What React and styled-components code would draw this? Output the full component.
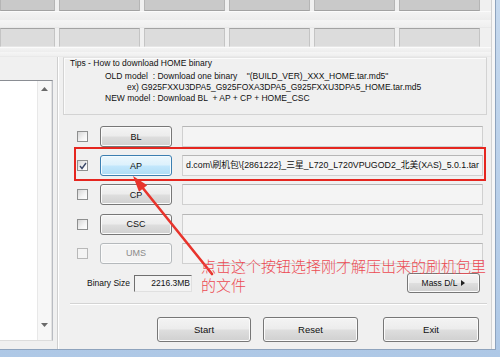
import React from "react";
import styled, { createGlobalStyle } from "styled-components";

const Global = createGlobalStyle`
  html, body { margin: 0; padding: 0; background: #f0f0f0; overflow: hidden; }
  body { font-family: "Liberation Sans", Arial, sans-serif; color: #111; }
  * { box-sizing: border-box; }
`;

const Screen = styled.div`
  position: relative;
  width: 500px;
  height: 357px;
  overflow: hidden;
  background: linear-gradient(to bottom, #c6d9ee, #aec8e6);
`;

const Shell = styled.div`
  width: 496px;
  height: 350px;
  background: #f7f7f7;
  border-right: 1px solid #8ea3bd;
  border-bottom: 1px solid #8ea3bd;
`;

const Window = styled.div`
  width: 492px;
  height: 349px;
  background: #f0f0f0;
  border-right: 1px solid #d2d2d2;
  display: flex;
  flex-direction: column;
`;

const TopStrip = styled.div`
  height: 57px;
  display: flex;
  flex-direction: column;
`;

const CellRow = styled.div`
  display: flex;
  gap: 4px;
  height: ${(p) => p.$h}px;
`;

const Cell = styled.div`
  width: ${(p) => p.$w}px;
  height: 100%;
  background: ${(p) => (p.$dark ? "#c9c9c9" : "#dcdcdc")};
  border-left: 1px solid ${(p) => (p.$dark ? "#b5b5b5" : "#c4c4c4")};
  border-right: 1px solid ${(p) => (p.$dark ? "#b5b5b5" : "#c4c4c4")};
  border-top: ${(p) => (p.$dark ? "none" : "1px solid #a3a3a3")};
  border-bottom: 1px solid ${(p) => (p.$dark ? "#a2a2a2" : "#e6e6e6")};
`;

const Band = styled.div`
  height: ${(p) => p.$h}px;
  border-top: 1px solid #fbfbfb;
  border-bottom: 1px solid #e9e9e9;
  background: linear-gradient(to bottom, #f3f3f3, #ededed 50%, #f5f5f5 55%, #efefef);
`;

const Body = styled.div`
  flex: 1;
  display: flex;
`;

const LeftCol = styled.div`
  width: 58px;
  padding: 23px 4px 8px 0;
  border-right: 1px solid #cfcfcf;
  box-shadow: 1px 0 0 #ffffff;
  display: flex;
`;

const LogBox = styled.div`
  flex: 1;
  display: flex;
  background: #ffffff;
  border-top: 1px solid #8a8d93;
  border-right: 1px solid #b9bcc2;
  border-bottom: 1px solid #dcdcdc;
`;

const LogArea = styled.div`
  flex: 1;
`;

const ScrollBar = styled.div`
  width: 15px;
  background: #f7f7f7;
  border-left: 1px solid #e8e8e8;
  border-right: 1px solid #e2e2e2;
  display: flex;
  flex-direction: column;
  justify-content: space-between;
  align-items: center;
  padding: 6px 0 13px;
`;

const RightCol = styled.div`
  width: 424px;
  margin-left: 5px;
  display: flex;
  flex-direction: column;
`;

const TipsBox = styled.div`
  height: 58px;
  border: 1px solid #d3d3d3;
  border-top-color: #e4e4e4;
  box-shadow: inset 1px 1px 0 #fbfbfb;
  padding-left: 6px;
  font-size: 8.5px;
  line-height: 11px;
`;

const TipsTitle = styled.div`
  margin-bottom: 2px;
`;

const TipsLine = styled.div`
  padding-left: ${(p) => p.$indent}px;
  white-space: pre;
`;

const Rows = styled.div`
  padding-top: 11px;
  display: flex;
  flex-direction: column;
  gap: 8.2px;
`;

const FileRow = styled.div`
  height: 21px;
  display: flex;
  align-items: center;
  padding-left: 14px;
`;

const Check = styled.div`
  width: 11px;
  height: 11px;
  margin-right: 12px;
  border: 1px solid ${(p) => (p.$disabled ? "#b8b8b8" : "#8e8f8f")};
  background: ${(p) =>
    p.$disabled ? "#f4f4f4" : "linear-gradient(135deg, #d6d6d6, #f4f4f4 60%, #ffffff)"};
  display: flex;
  align-items: center;
  justify-content: center;
`;

const Btn = styled.div`
  width: ${(p) => p.$w}px;
  height: ${(p) => p.$h}px;
  margin-left: ${(p) => p.$ml || 0}px;
  margin-right: ${(p) => p.$mr || 0}px;
  border-radius: 3px;
  border: 1px solid
    ${(p) => (p.$hot ? "#3c7fb1" : p.$disabled ? "#b5b9bc" : "#777777")};
  background: ${(p) =>
    p.$hot
      ? "linear-gradient(to bottom, #ecf7fd 0%, #dcf1fc 48%, #c3e7fc 52%, #aedcf5 100%)"
      : p.$disabled
      ? "#f3f3f3"
      : "linear-gradient(to bottom, #f4f4f4 0%, #ececec 48%, #dedede 52%, #d0d0d0 100%)"};
  box-shadow: inset 0 0 0 1px ${(p) => (p.$hot ? "#f4fbff" : "#fbfbfb")};
  color: ${(p) => (p.$disabled ? "#8a8a8a" : "#111")};
  font-size: ${(p) => p.$fs || 9}px;
  display: flex;
  align-items: center;
  justify-content: center;
  gap: 4px;
`;

const Field = styled.div`
  width: 301px;
  height: 21px;
  border: 1px solid #d0d0d0;
  border-top-color: #b6b6b6;
  background: #f4f4f4;
  font-size: 8.8px;
  line-height: 19px;
  padding-left: 3px;
  white-space: nowrap;
  overflow: hidden;
  font-family: "Liberation Sans", "Noto Sans CJK SC", sans-serif;
`;

const SizeRow = styled.div`
  margin-top: 9.5px;
  height: 20px;
  display: flex;
  align-items: center;
  padding-left: 24px;
  padding-right: 7px;
`;

const SizeLabel = styled.div`
  font-size: 8.5px;
  margin-right: 4px;
`;

const SizeField = styled.div`
  width: 58px;
  height: 17px;
  border-left: 1px solid #6f6f6f;
  border-top: 1px solid #6f6f6f;
  border-right: 1px solid #e0e0e0;
  border-bottom: 1px solid #e0e0e0;
  background: #f3f3f3;
  font-size: 8.5px;
  line-height: 15px;
  text-align: right;
  padding-right: 1px;
  margin-right: auto;
`;

const Separator = styled.div`
  margin-top: 9.5px;
  margin-left: 7px;
  border-top: 1px solid #d4d4d4;
  border-bottom: 1px solid #ffffff;
`;

const BottomBar = styled.div`
  margin-top: 12.5px;
  display: flex;
`;

const RedBox = styled.div`
  position: absolute;
  left: 74px;
  top: 147px;
  width: 412px;
  height: 34px;
  border: 2px solid #e5261f;
  pointer-events: none;
`;

const Overlay = styled.svg`
  position: absolute;
  left: 0;
  top: 0;
  pointer-events: none;
`;

const Note = styled.div`
  position: absolute;
  left: 201px;
  top: 256px;
  font-family: "Noto Sans CJK SC", sans-serif;
  font-size: 15px;
  font-weight: 300;
  line-height: 19px;
  color: #ec4a52;
  white-space: nowrap;
`;

const Up = () => (
  <svg width="7" height="4" viewBox="0 0 7 4">
    <path d="M0 4 L3.5 0 L7 4 Z" fill="#6a6a6a" />
  </svg>
);
const Down = () => (
  <svg width="7" height="4" viewBox="0 0 7 4">
    <path d="M0 0 L3.5 4 L7 0 Z" fill="#6a6a6a" />
  </svg>
);
const Tick = () => (
  <svg width="8" height="8" viewBox="0 0 8 8">
    <path d="M1 4 L3 6.5 L7 1" fill="none" stroke="#3d4a6a" strokeWidth="1.4" />
  </svg>
);
const Tri = () => (
  <svg width="4" height="6" viewBox="0 0 4 6">
    <path d="M0 0 L4 3 L0 6 Z" fill="#222" />
  </svg>
);

const files = [
  { label: "BL" },
  { label: "AP", checked: true, hot: true, path: "d.com\\刷机包\\{2861222}_三星_L720_L720VPUGOD2_北美(XAS)_5.0.1.tar" },
  { label: "CP" },
  { label: "CSC" },
  { label: "UMS", disabled: true },
];

const cellWidths = [55, 81, 81, 81, 81, 81];

export default function App() {
  return (
    <>
      <Global />
      <Screen>
        <Shell>
          <Window>
            <TopStrip>
              <CellRow $h={11}>
                {cellWidths.map((w, i) => (
                  <Cell key={i} $w={w} $dark />
                ))}
              </CellRow>
              <Band $h={17} />
              <CellRow $h={19}>
                {cellWidths.map((w, i) => (
                  <Cell key={i} $w={w} />
                ))}
              </CellRow>
              <Band $h={10} />
            </TopStrip>
            <Body>
              <LeftCol>
                <LogBox>
                  <LogArea />
                  <ScrollBar>
                    <Up />
                    <Down />
                  </ScrollBar>
                </LogBox>
              </LeftCol>
              <RightCol>
                <TipsBox>
                  <TipsTitle>Tips - How to download HOME binary</TipsTitle>
                  <TipsLine $indent={35}>{'OLD model  : Download one binary    "(BUILD_VER)_XXX_HOME.tar.md5"'}</TipsLine>
                  <TipsLine $indent={57}>ex) G925FXXU3DPA5_G925FOXA3DPA5_G925FXXU3DPA5_HOME.tar.md5</TipsLine>
                  <TipsLine $indent={35}>NEW model : Download BL  + AP + CP + HOME_CSC</TipsLine>
                </TipsBox>
                <Rows>
                  {files.map((f) => (
                    <FileRow key={f.label}>
                      <Check $disabled={f.disabled}>{f.checked && <Tick />}</Check>
                      <Btn $w={72} $h={21} $mr={10} $hot={f.hot} $disabled={f.disabled}>
                        {f.label}
                      </Btn>
                      <Field>{f.path || ""}</Field>
                    </FileRow>
                  ))}
                </Rows>
                <SizeRow>
                  <SizeLabel>Binary Size</SizeLabel>
                  <SizeField>2216.3MB</SizeField>
                  <Btn $w={73} $h={20} $fs={8.5}>
                    Mass D/L <Tri />
                  </Btn>
                </SizeRow>
                <Separator />
                <BottomBar>
                  <Btn $w={94} $h={25} $ml={94} $fs={9.5}>Start</Btn>
                  <Btn $w={95} $h={25} $ml={12} $fs={9.5}>Reset</Btn>
                  <Btn $w={96} $h={25} $ml={25} $fs={9.5}>Exit</Btn>
                </BottomBar>
              </RightCol>
            </Body>
          </Window>
        </Shell>
        <RedBox />
        <Overlay width="500" height="357" viewBox="0 0 500 357">
          <line x1="212" y1="274" x2="142" y2="187" stroke="#e8342c" strokeWidth="2.6" strokeLinecap="round" />
          <polygon points="133,176 147.2,185.2 139.0,191.8" fill="#e8342c" />
        </Overlay>
        <Note>
          点击这个按钮选择刚才解压出来的刷机包里
          <br />
          的文件
        </Note>
      </Screen>
    </>
  );
}
